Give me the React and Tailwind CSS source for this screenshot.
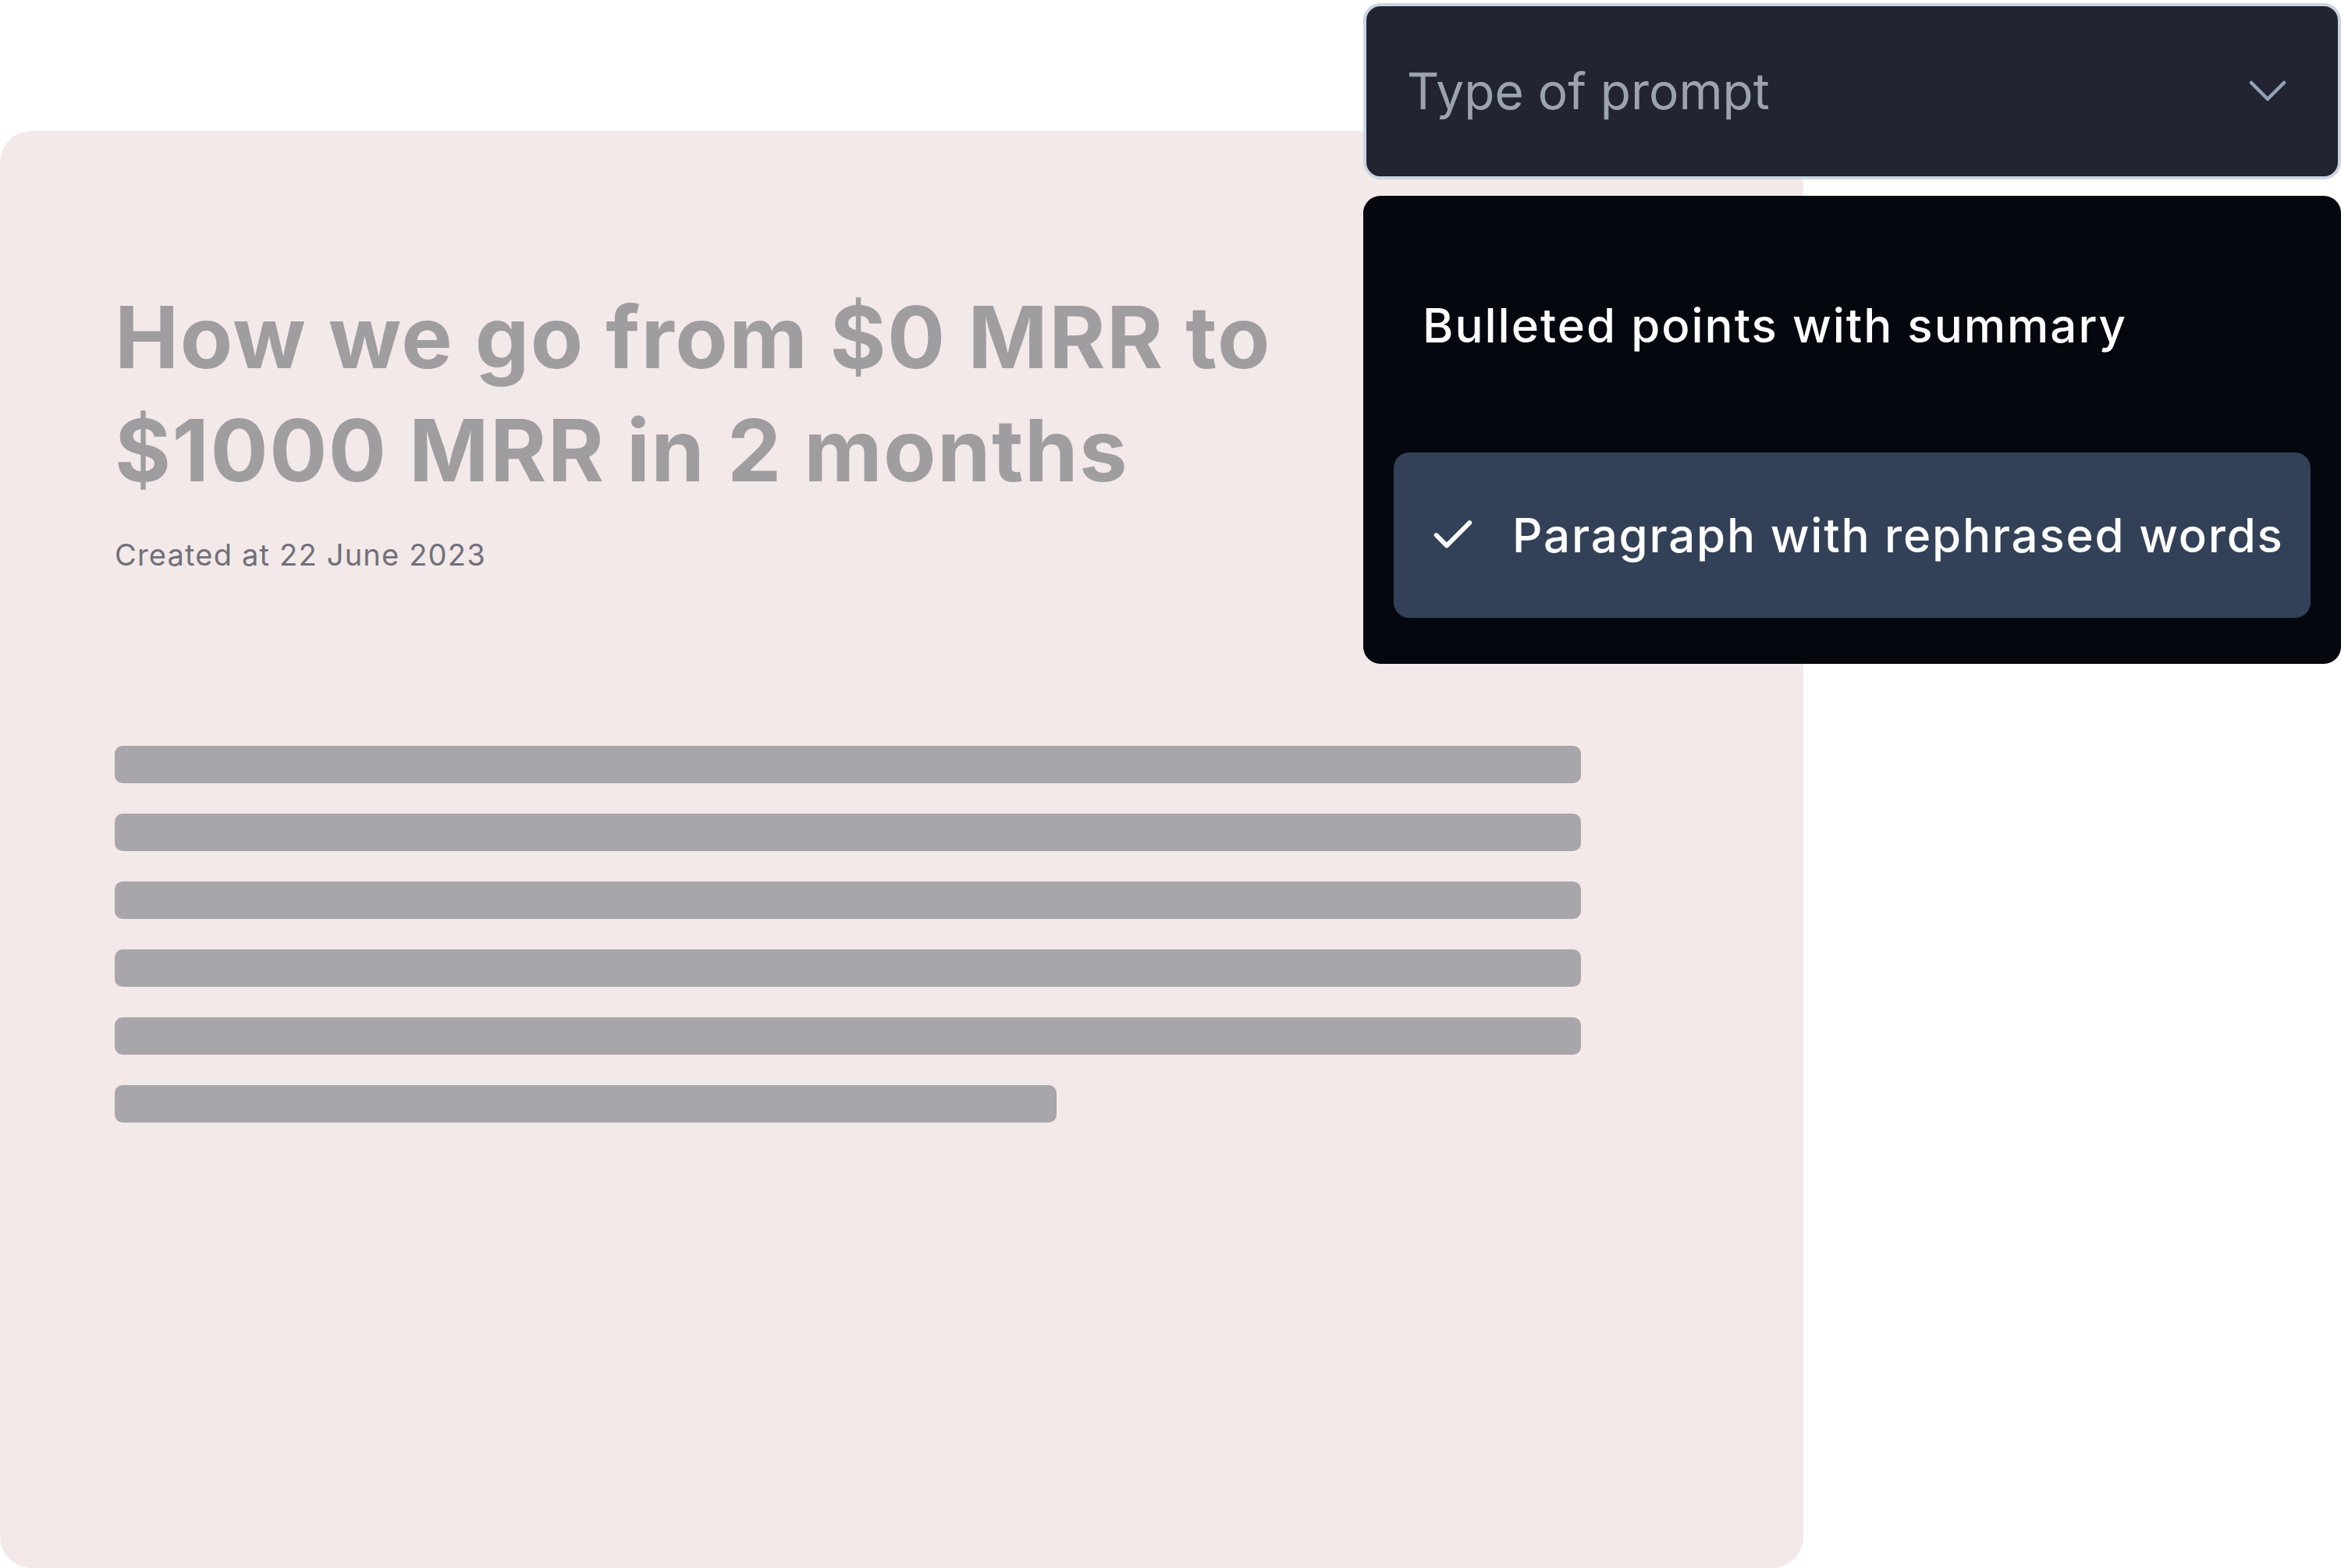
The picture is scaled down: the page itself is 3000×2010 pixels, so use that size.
import { Check } from "lucide-react";

const bars = ["w-full", "w-full", "w-full", "w-full", "w-full", "w-[1207px]"];

function Article() {
    return (
        <div className="mt-[168px] w-[2311px] h-[1842px] bg-[#f3e9e8] rounded-[40px] pl-[147px] pt-[192px]">
            <h1 className="w-[1800px] text-[110px] leading-[145px] font-bold tracking-[1.5px] text-[#a09da1]">
                How we go from $0 MRR to
                <br />
                $1000 MRR in 2 months
            </h1>
            <p className="mt-[38px] text-[38px] leading-[46px] tracking-[1.2px] text-[#71707c]">Created at 22 June 2023</p>

            {/* placeholder lines */}
            <div className="mt-[222px] w-[1879px] flex flex-col gap-[39px]">
                {bars.map((w, i) => (
                    <div key={i} className={`${w} h-[48px] rounded-[10px] bg-[#a8a6ab]`} />
                ))}
            </div>
        </div>
    );
}

function PromptSelect() {
    return (
        <div className="absolute left-[1747px] top-[4px] w-[1253px] flex flex-col gap-[21px]">
            {/* Trigger */}
            <div className="h-[226px] flex items-center justify-between pl-[52px] pr-[66px] bg-[#222432] border-4 border-[#cbd5e1] rounded-[22px]">
                <span className="text-[64px] text-[#9ca3af]">Type of prompt</span>
                <svg width="48" height="28" viewBox="0 0 48 28" fill="none">
                    <path d="M3 3 L24 24 L45 3" stroke="#94a3b8" strokeWidth="4.5" strokeLinecap="round" strokeLinejoin="round" />
                </svg>
            </div>

            {/* Menu */}
            <div className="bg-[#05070f] rounded-[22px] px-[39px] pt-[60px] pb-[59px] flex flex-col gap-[57px]">
                <div className="h-[212px] flex items-center pl-[37px] rounded-[20px] text-[60px] font-medium tracking-[2px] text-white">
                    Bulleted points with summary
                </div>
                <div className="h-[212px] flex items-center pl-[44px] rounded-[20px] bg-[#334158] text-[60px] font-medium tracking-[1.8px] text-white">
                    <Check size={64} strokeWidth={2.2} className="text-white" />
                    <span className="ml-[44px]">Paragraph with rephrased words</span>
                </div>
            </div>
        </div>
    );
}

export default function App() {
    return (
        <div className="relative w-[3000px] h-[2010px] bg-white overflow-hidden font-['Inter','Liberation_Sans',sans-serif]">
            <Article />
            <PromptSelect />
        </div>
    );
}
